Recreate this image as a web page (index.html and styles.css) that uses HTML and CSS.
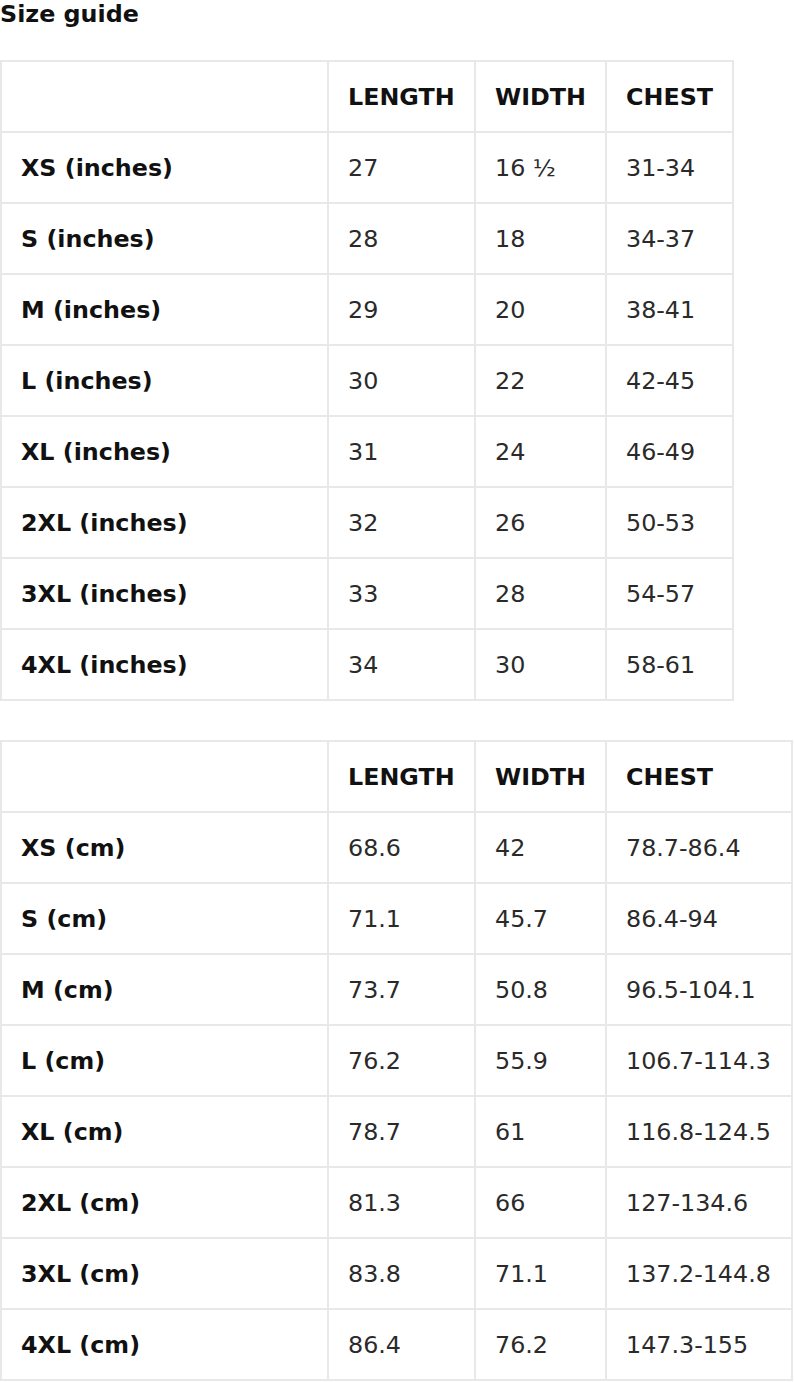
FILE: index.html
```html
<!DOCTYPE html>
<html>
<head>
<meta charset="utf-8">
<link rel="stylesheet" href="styles.css">
</head>
<body>
<h1 class="title">Size guide</h1>
<table class="size-table t-inches">
  <colgroup><col class="c1"><col class="c2"><col class="c3"><col class="c4"></colgroup>
  <tr><th></th><th>LENGTH</th><th>WIDTH</th><th>CHEST</th></tr>
  <tr><th>XS (inches)</th><td>27</td><td>16 ½</td><td>31-34</td></tr>
  <tr><th>S (inches)</th><td>28</td><td>18</td><td>34-37</td></tr>
  <tr><th>M (inches)</th><td>29</td><td>20</td><td>38-41</td></tr>
  <tr><th>L (inches)</th><td>30</td><td>22</td><td>42-45</td></tr>
  <tr><th>XL (inches)</th><td>31</td><td>24</td><td>46-49</td></tr>
  <tr><th>2XL (inches)</th><td>32</td><td>26</td><td>50-53</td></tr>
  <tr><th>3XL (inches)</th><td>33</td><td>28</td><td>54-57</td></tr>
  <tr><th>4XL (inches)</th><td>34</td><td>30</td><td>58-61</td></tr>
</table>
<table class="size-table t-cm">
  <colgroup><col class="c1"><col class="c2"><col class="c3"><col class="c4"></colgroup>
  <tr><th></th><th>LENGTH</th><th>WIDTH</th><th>CHEST</th></tr>
  <tr><th>XS (cm)</th><td>68.6</td><td>42</td><td>78.7-86.4</td></tr>
  <tr><th>S (cm)</th><td>71.1</td><td>45.7</td><td>86.4-94</td></tr>
  <tr><th>M (cm)</th><td>73.7</td><td>50.8</td><td>96.5-104.1</td></tr>
  <tr><th>L (cm)</th><td>76.2</td><td>55.9</td><td>106.7-114.3</td></tr>
  <tr><th>XL (cm)</th><td>78.7</td><td>61</td><td>116.8-124.5</td></tr>
  <tr><th>2XL (cm)</th><td>81.3</td><td>66</td><td>127-134.6</td></tr>
  <tr><th>3XL (cm)</th><td>83.8</td><td>71.1</td><td>137.2-144.8</td></tr>
  <tr><th>4XL (cm)</th><td>86.4</td><td>76.2</td><td>147.3-155</td></tr>
</table>
</body>
</html>
```
FILE: styles.css
```css
html, body {
  margin: 0;
  padding: 0;
  background: #ffffff;
}
body {
  font-family: "DejaVu Sans", sans-serif;
  font-size: 23.8px;
  color: #1c1c1c;
}
.title {
  margin: 0;
  font-size: 23.8px;
  font-weight: bold;
  line-height: 28px;
  color: #111;
}
.size-table {
  border-collapse: collapse;
  table-layout: fixed;
}
.t-inches {
  margin-top: 32px;
  width: 732px;
}
.t-cm {
  margin-top: 39px;
  width: 791px;
}
.c1 { width: 327px; }
.c2 { width: 147px; }
.c3 { width: 131px; }
.t-inches .c4 { width: 127px; }
.t-cm .c4 { width: 186px; }
.size-table th,
.size-table td {
  border: 2px solid #e8e8e8;
  height: 69px;
  padding: 0 0 0 19px;
  text-align: left;
  vertical-align: middle;
  white-space: nowrap;
}
.size-table th {
  font-weight: bold;
  color: #111;
}
.size-table td {
  font-weight: normal;
  color: #2a2a2a;
}
```
